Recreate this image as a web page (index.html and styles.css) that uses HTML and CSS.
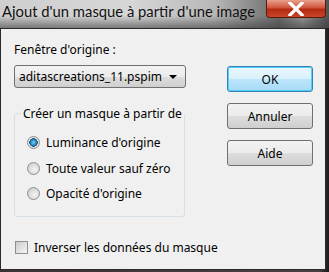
FILE: index.html
```html
<!DOCTYPE html>
<html lang="fr">
<head>
  <meta charset="UTF-8" />
  <title>Ajout d'un masque</title>
  <link rel="stylesheet" href="styles.css">
</head>
<body>
  <div class="window">
    <div class="titlebar">
      <span class="title">Ajout d'un masque à partir d'une image</span>
      <div class="close">
        <svg width="18" height="14" viewBox="0 0 18 14">
          <path d="M3 1 L15 13 M15 1 L3 13" stroke="#fff" stroke-width="3.2" stroke-linecap="square"/>
        </svg>
      </div>
    </div>

    <div class="client">
      <div class="left">
        <div class="label">Fenêtre d'origine :</div>
        <div class="select">
          <span>aditascreations_11.pspim</span>
          <span class="arrow"></span>
        </div>

        <fieldset class="group">
          <legend>Créer un masque à partir de</legend>
          <div class="option"><span class="radio checked"></span>Luminance d'origine</div>
          <div class="option"><span class="radio"></span>Toute valeur sauf zéro</div>
          <div class="option"><span class="radio"></span>Opacité d'origine</div>
        </fieldset>

        <div class="check"><span class="box"></span>Inverser les données du masque</div>
      </div>

      <div class="buttons">
        <div class="btn default">OK</div>
        <div class="btn">Annuler</div>
        <div class="btn">Aide</div>
      </div>
    </div>
  </div>
</body>
</html>
```

FILE: styles.css
```css
body {
  margin: 0;
  background: #2a2226;
}
.window {
  width: 329px;
  height: 272px;
  overflow: hidden;
  font-family: "Noto Sans", sans-serif;
  font-size: 12px;
  color: #000;
  white-space: nowrap;
  background: linear-gradient(90deg, #3a3236 0, #4a3e44 97%, #1e1a1c 100%);
}
.titlebar {
  height: 28px;
  display: flex;
  justify-content: space-between;
  background:
    linear-gradient(180deg, rgba(210,210,210,0) 55%, rgba(60,60,60,0.6) 100%),
    linear-gradient(90deg, #cfcfcf 0, #d6d6d6 40%, #b8b8b8 65%, #6a6a6a 85%, #9a9a9a 92%, #505050 100%);
}
.title {
  font-family: Lato, sans-serif;
  font-size: 14.8px;
  line-height: 18px;
  padding: 2px 0 0 2px;
  color: #111;
}
.close {
  flex-shrink: 0;
  width: 58px;
  height: 17px;
  margin-right: 3px;
  border: 1px solid #5a1a10;
  border-top: none;
  border-radius: 0 0 4px 4px;
  background: linear-gradient(180deg, #e8a08c 0, #d0553c 45%, #b42a12 55%, #c8452a 100%);
  display: flex;
  align-items: center;
  justify-content: center;
}
.client {
  width: 324px;
  height: 240px;
  border: 1px solid #2a2a2a;
  background: #f0f0f0;
  display: flex;
}
.left {
  width: 173px;
  flex-shrink: 0;
  padding: 13px 0 0 13px;
}
.label {
  line-height: 15px;
}
.select {
  margin-top: 8px;
  width: 166px;
  height: 21px;
  padding-left: 4px;
  border: 1px solid #707070;
  border-radius: 3px;
  background: linear-gradient(180deg, #f3f3f3 0, #ebebeb 50%, #dddddd 51%, #cfcfcf 100%);
  display: flex;
  align-items: center;
  justify-content: space-between;
}
.arrow {
  width: 0;
  height: 0;
  border-left: 4px solid transparent;
  border-right: 4px solid transparent;
  border-top: 4px solid #000;
  margin-right: 8px;
}
.group {
  margin: 17px 0 0 0;
  padding: 8px 0 9px 12px;
  width: 157px;
  border: 1px solid #d5dfe5;
  border-radius: 3px;
}
.group legend {
  padding: 0 2px;
  margin-left: -6px;
}
.option {
  display: flex;
  align-items: center;
  height: 25.5px;
}
.radio {
  flex-shrink: 0;
  width: 11px;
  height: 11px;
  border: 1px solid #8e8f8f;
  border-radius: 50%;
  margin-right: 6px;
  background: radial-gradient(circle at 60% 60%, #f4f4f4 0, #d8d8d8 60%, #c4c4c4 100%);
}
.radio.checked {
  background: radial-gradient(circle, #7fd2f5 0, #2b8fc8 2.5px, #1a4e7a 4px, #e8e8e8 4.5px, #d4d4d4 100%);
}
.check {
  display: flex;
  align-items: center;
  margin-top: 22px;
  margin-left: 1px;
}
.box {
  flex-shrink: 0;
  width: 11px;
  height: 11px;
  border: 1px solid #8e8f8f;
  margin-right: 6px;
  background: linear-gradient(135deg, #cbcbcb 0, #f6f6f6 100%);
}
.buttons {
  padding: 37px 0 0 40px;
  display: flex;
  flex-direction: column;
  gap: 11px;
}
.btn {
  width: 84px;
  height: 24px;
  border: 1px solid #707070;
  border-radius: 3px;
  background: linear-gradient(180deg, #f2f2f2 0, #ebebeb 50%, #dddddd 51%, #cfcfcf 100%);
  display: flex;
  align-items: center;
  justify-content: center;
}
.btn.default {
  border-color: #3c7fb1;
  box-shadow: inset 0 0 0 1px #48d2fc;
  background: linear-gradient(180deg, #eaf6fd 0, #d9f0fc 50%, #bee6fd 51%, #a7d9f5 100%);
}
```
